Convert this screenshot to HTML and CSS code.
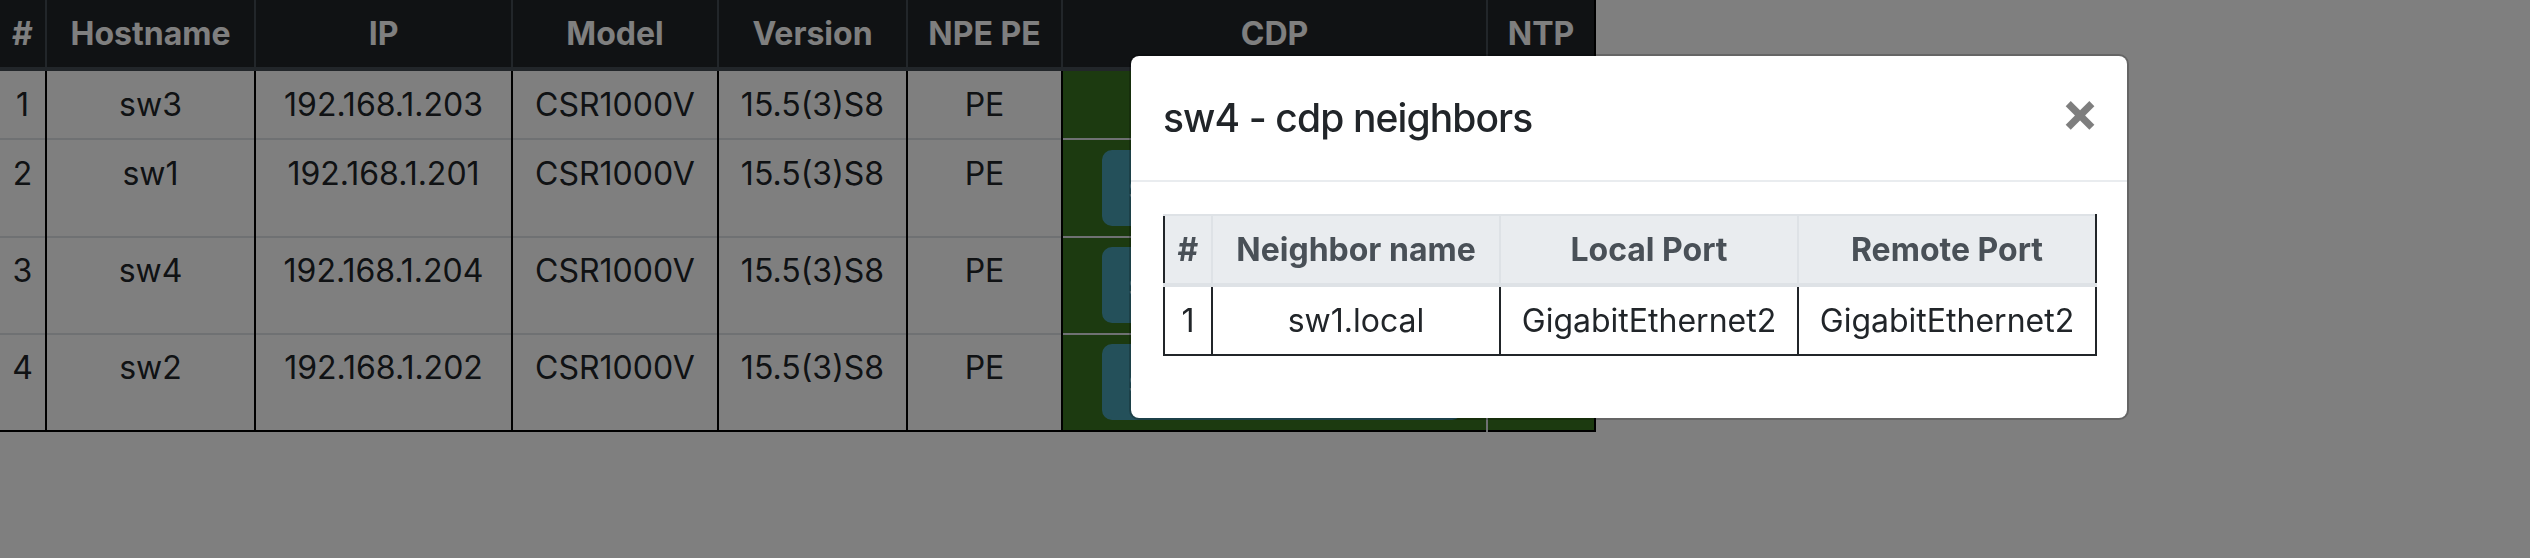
FILE: index.html
```html
<!DOCTYPE html>
<html lang="en">
<head>
<meta charset="utf-8">
<title>Devices</title>
<link rel="stylesheet" href="styles.css">
</head>
<body>
<table class="devices">
  <colgroup>
    <col class="w-num"><col class="w-host"><col class="w-ip"><col class="w-model"><col class="w-ver"><col class="w-npe"><col class="w-cdp"><col class="w-ntp">
  </colgroup>
  <thead>
    <tr><th>#</th><th>Hostname</th><th>IP</th><th>Model</th><th>Version</th><th>NPE PE</th><th>CDP</th><th>NTP</th></tr>
  </thead>
  <tbody>
    <tr><td>1</td><td>sw3</td><td>192.168.1.203</td><td>CSR1000V</td><td>15.5(3)S8</td><td>PE</td><td class="ok cdp"></td><td class="ok ntp"></td></tr>
    <tr><td>2</td><td>sw1</td><td>192.168.1.201</td><td>CSR1000V</td><td>15.5(3)S8</td><td>PE</td><td class="ok cdp"><button class="btn-info">show cdp neighbors</button></td><td class="ok ntp"></td></tr>
    <tr><td>3</td><td>sw4</td><td>192.168.1.204</td><td>CSR1000V</td><td>15.5(3)S8</td><td>PE</td><td class="ok cdp"><button class="btn-info">show cdp neighbors</button></td><td class="ok ntp"></td></tr>
    <tr><td>4</td><td>sw2</td><td>192.168.1.202</td><td>CSR1000V</td><td>15.5(3)S8</td><td>PE</td><td class="ok cdp"><button class="btn-info">show cdp neighbors</button></td><td class="ok ntp"></td></tr>
  </tbody>
</table>

<div class="backdrop"></div>

<div class="modal">
  <div class="modal-header">
    <h5 class="modal-title">sw4 - cdp neighbors</h5>
    <button class="close" aria-label="Close">×</button>
  </div>
  <div class="modal-body">
    <table class="nb">
      <colgroup><col class="n-num"><col class="n-name"><col class="n-port"><col class="n-port"></colgroup>
      <thead>
        <tr><th>#</th><th>Neighbor name</th><th>Local Port</th><th>Remote Port</th></tr>
      </thead>
      <tbody>
        <tr><td>1</td><td>sw1.local</td><td>GigabitEthernet2</td><td>GigabitEthernet2</td></tr>
      </tbody>
    </table>
  </div>
</div>
</body>
</html>
```

FILE: styles.css
```css
* { box-sizing: border-box; }

body {
  margin: 0;
  background: #fff;
  color: #212529;
  font-family: "Inter", "Noto Sans", sans-serif;
  font-size: 32px;
  line-height: 48px;
}

/* main devices table */
.devices {
  border-collapse: collapse;
  table-layout: fixed;
  width: 1595px;
  border-right: 2px solid #000;
  border-bottom: 2px solid #000;
}
.w-num { width: 46px; }
.w-host { width: 209px; }
.w-ip { width: 257px; }
.w-model { width: 206px; }
.w-ver { width: 189px; }
.w-npe { width: 155px; }
.w-cdp { width: 425px; }
.w-ntp { width: 108px; }

.devices th {
  background: #212529;
  color: #fff;
  font-weight: 700;
  text-align: center;
  padding: 9.6px 4px;
  border-left: 2px solid #454d55;
  border-bottom: 4px solid #454d55;
  white-space: nowrap;
}
.devices th:first-child { border-left: 0; }

.devices td {
  padding: 9.6px 4px;
  text-align: center;
  vertical-align: top;
  border-top: 2px solid #dee2e6;
  border-left: 2px solid #000;
  border-right: 2px solid #000;
  white-space: nowrap;
}
.devices td:first-child { border-left: 0; }

.devices td.ok { background: #387421; }
.devices td.cdp {
  text-align: left;
  padding-left: 39px;
  border-right: 2px solid #dee2e6;
}

.btn-info {
  display: inline-block;
  font: inherit;
  line-height: 48px;
  padding: 12px 24px;
  color: #fff;
  background: #48a0b4;
  border: 2px solid #48a0b4;
  border-radius: 10px;
}

/* backdrop + modal */
.backdrop {
  position: fixed;
  inset: 0;
  background: rgba(0, 0, 0, 0.5);
}

.modal {
  position: absolute;
  top: 54px;
  left: 1129px;
  width: 1000px;
  background: #fff;
  background-clip: padding-box;
  border: 2px solid rgba(0, 0, 0, 0.2);
  border-radius: 10px;
}

.modal-header {
  display: flex;
  align-items: flex-start;
  padding: 32px;
  border-bottom: 2px solid #e9ecef;
}
.modal-title {
  margin: 0;
  font-size: 39px;
  font-weight: 500;
  letter-spacing: -0.9px;
  line-height: 60px;
}
.close {
  margin: -32px -36px -32px auto;
  padding: 32px;
  background: none;
  border: 0;
  font-family: "Inter", "Noto Sans", sans-serif;
  font-size: 56px;
  font-weight: 700;
  line-height: 48px;
  color: #000;
  opacity: 0.5;
}

.modal-body { padding: 32px; }

.nb {
  width: 100%;
  table-layout: fixed;
  border-collapse: collapse;
  margin-bottom: 30px;
  border-bottom: 2px solid #212529;
}
.n-num { width: 48px; }
.n-name { width: 288px; }
.n-port { width: 298px; }

.nb th {
  background: #e9ecef;
  color: #495057;
  font-weight: 700;
  text-align: center;
  padding: 9.6px 4px;
  border-top: 2px solid #dee2e6;
  border-bottom: 4px solid #dee2e6;
  border-left: 2px solid #dee2e6;
  white-space: nowrap;
}
.nb th:first-child { border-left: 2px solid #212529; }
.nb th:last-child { border-right: 2px solid #212529; }

.nb td {
  padding: 9.6px 4px;
  text-align: center;
  border: 2px solid #212529;
  border-top: 0;
  white-space: nowrap;
}
```
